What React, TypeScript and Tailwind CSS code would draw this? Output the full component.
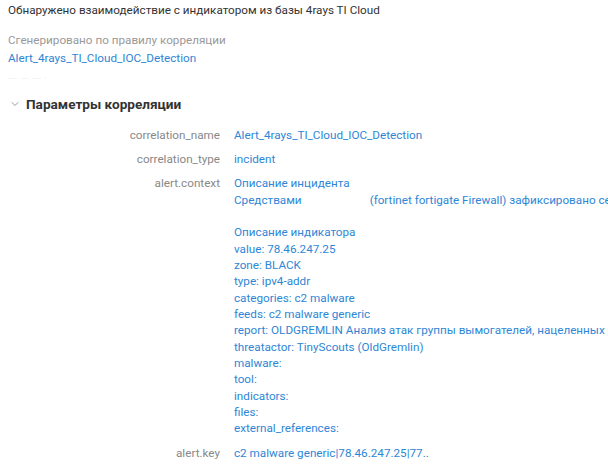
import { ChevronDown } from 'lucide-react';

const contextLines: string[] = [
  'value: 78.46.247.25',
  'zone: BLACK',
  'type: ipv4-addr',
  'categories: c2 malware',
  'feeds: c2 malware generic',
  'report: OLDGREMLIN Анализ атак группы вымогателей, нацеленных',
  'threatactor: TinyScouts (OldGremlin)',
  'malware:',
  'tool:',
  'indicators:',
  'files:',
  'external_references:',
];

function Row({ label, children }: { label: string; children: React.ReactNode }) {
  return (
    <>
      <div className="text-right text-[#888]">{label}</div>
      <div className="min-w-0 text-[#2e86d6]">{children}</div>
    </>
  );
}

export default function App() {
  return (
    <div
      className="h-[468px] w-[608px] overflow-hidden whitespace-nowrap bg-white pl-2 pt-[2px] text-[11.7px] leading-[16.33px] text-[#333]"
      style={{ fontFamily: 'Roboto, "Noto Sans", sans-serif' }}
    >
      <div>Обнаружено взаимодействие с индикатором из базы 4rays TI Cloud</div>

      <div className="mt-[14px] text-[#999]">Сгенерировано по правилу корреляции</div>
      <div className="mt-[1px] text-[#2e86d6]">Alert_4rays_TI_Cloud_IOC_Detection</div>
      <div className="mt-[4px] text-[#f3f3f3]">— — — ·</div>

      <div className="mt-[10px] flex items-center">
        <ChevronDown className="ml-[1px] h-[12px] w-[12px] text-[#999]" strokeWidth={2} />
        <span className="ml-[5px] text-[13.6px] font-bold text-[#333]">Параметры корреляции</span>
      </div>

      <div className="mt-[14px] grid grid-cols-[212px_1fr] gap-x-[14px] gap-y-[8px]">
        <Row label="correlation_name">Alert_4rays_TI_Cloud_IOC_Detection</Row>
        <Row label="correlation_type">incident</Row>
        <Row label="alert.context">
          <div>Описание инцидента</div>
          <div>
            Средствами<span className="inline-block w-[68px]" />(fortinet fortigate Firewall) зафиксировано се
          </div>
          <div className="h-[16.33px]" />
          <div>Описание индикатора</div>
          {contextLines.map((line) => (
            <div key={line}>{line}</div>
          ))}
        </Row>
        <Row label="alert.key">c2 malware generic|78.46.247.25|77..</Row>
      </div>
    </div>
  );
}
